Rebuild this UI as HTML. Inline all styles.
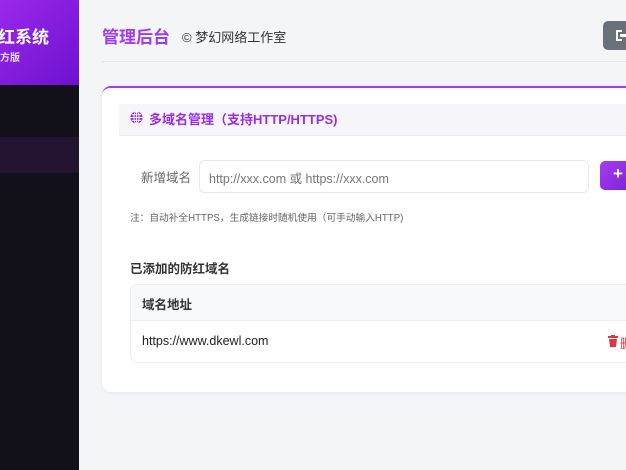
<!DOCTYPE html>
<html><head><meta charset="utf-8"><style>
*{margin:0;padding:0;box-sizing:border-box}
body{width:626px;height:470px;overflow:hidden;background:#f4f5f7;font-family:"Liberation Sans","Noto Sans CJK SC",sans-serif;position:relative}
.sb{position:absolute;left:0;top:0;width:79px;height:470px;background:#121018;overflow:hidden}
.sbh{position:absolute;left:0;top:0;width:79px;height:85px;background:linear-gradient(135deg,#9a28ea,#6d12d0);overflow:hidden}
.t1{position:absolute;left:-19px;top:23px;color:#fff;font-weight:bold;font-size:17px;white-space:nowrap}
.t2{position:absolute;left:-10px;top:49px;color:#eadcff;font-weight:bold;font-size:10px;white-space:nowrap}
.act{position:absolute;left:0;top:137px;width:79px;height:36px;background:#231532}
.abs{position:absolute;white-space:nowrap}
</style></head><body>
<div class="sb"><div class="sbh"><div class="t1">防红系统</div><div class="t2">官方版</div></div><div class="act"></div></div>
<div class="abs" style="left:102px;top:23px;font-size:17px;font-weight:bold;color:#a03de8">管理后台</div>
<div class="abs" style="left:182px;top:27px;font-size:13px;color:#333">© 梦幻网络工作室</div>
<div class="abs" style="left:603px;top:21px;width:40px;height:29px;background:#6b717b;border-radius:5px"><span style="position:absolute;left:13px;top:9px;width:6px;height:11px;border:2px solid #fff;border-right:none"></span><span style="position:absolute;left:17px;top:13px;width:8px;height:3px;background:#fff"></span></div>
<div class="abs" style="left:102px;top:61px;width:524px;height:1px;background:#e6e7ea"></div>
<div class="abs" style="left:102px;top:86px;width:540px;height:306px;background:#fff;border-radius:9px;border-top:2px solid #a23ef0;box-shadow:0 1px 3px rgba(0,0,0,.06)"></div>
<div class="abs" style="left:119px;top:104px;width:507px;height:32px;background:#f6f6f8;border-bottom:1px solid #ececf0"></div>
<svg class="abs" style="left:130px;top:111px" width="13" height="13" viewBox="0 0 14 14"><circle cx="7" cy="7" r="6.5" fill="#9a2de8"/><path d="M0.5 7h13M7 0.5v13M2 4h10M2 10h10" stroke="#fff" stroke-width="1"/><ellipse cx="7" cy="7" rx="2.8" ry="6.5" fill="none" stroke="#fff" stroke-width="1"/></svg>
<div class="abs" style="left:149px;top:109px;font-size:13px;font-weight:bold;color:#9a2de8">多域名管理（支持HTTP/HTTPS)</div>
<div class="abs" style="left:141px;top:167px;font-size:12.5px;color:#666">新增域名</div>
<div class="abs" style="left:199px;top:160px;width:390px;height:33px;border:1px solid #e8e9ee;border-radius:6px;background:#fff"></div>
<div class="abs" style="left:209px;top:168px;font-size:12.5px;color:#777">http://xxx.com 或 https://xxx.com</div>
<div class="abs" style="left:600px;top:161px;width:40px;height:29px;background:linear-gradient(135deg,#a53ef0,#7a1ad8);border-radius:5px;color:#fff;font-size:17px;font-weight:bold;padding:3px 0 0 13px">+</div>
<div class="abs" style="left:130px;top:210px;font-size:9.7px;color:#666">注：自动补全HTTPS，生成链接时随机使用（可手动输入HTTP)</div>
<div class="abs" style="left:130px;top:258px;font-size:12.5px;font-weight:bold;color:#333">已添加的防红域名</div>
<div class="abs" style="left:130px;top:284px;width:510px;height:79px;border:1px solid #eceef2;border-radius:7px;background:#fff;overflow:hidden"><div style="height:36px;background:#f8f9fb;border-bottom:1px solid #eceef2"></div></div>
<div class="abs" style="left:142px;top:294px;font-size:12.5px;font-weight:bold;color:#333">域名地址</div>
<div class="abs" style="left:142px;top:334px;font-size:12.5px;color:#222">https://www.dkewl.com</div>
<svg class="abs" style="left:608px;top:335px" width="10" height="12" viewBox="0 0 10 12"><rect x="0" y="1" width="10" height="2" fill="#dc3545"/><rect x="3" y="0" width="4" height="2" fill="#dc3545"/><path d="M1 4h8l-1 8H2z" fill="#dc3545"/></svg>
<div class="abs" style="left:620px;top:333px;font-size:12.5px;color:#dc3545">删</div>
</body></html>
